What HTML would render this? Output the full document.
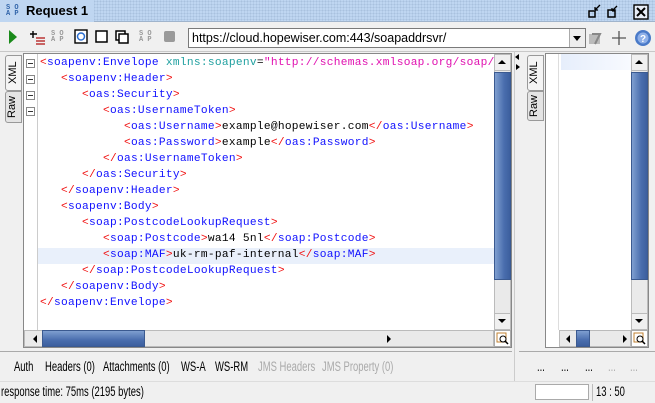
<!DOCTYPE html>
<html><head><meta charset="utf-8"><style>
*{box-sizing:border-box;margin:0;padding:0}
body{width:655px;height:403px;overflow:hidden;background:#f0f0f0;font-family:"Liberation Sans",sans-serif;font-size:12px;position:relative}
.abs{position:absolute}
.title{left:0;top:0;width:655px;height:22px;background:#bfd6f1;border-bottom:1px solid #a0b4cc;
background-image:radial-gradient(#a9c1de 0.8px,transparent 0.9px);background-size:3px 3px}
.title .lbl{position:absolute;left:0;top:0;height:22px;background:#bfd6f1;padding:3px 6px 0 26px;font-weight:bold;font-size:13px}
.soap{font-family:"Liberation Mono",monospace;font-size:7px;line-height:6px;color:#555;font-weight:bold;text-align:center}
.code{font-family:"Liberation Mono",monospace;font-size:11.2px;line-height:16px;white-space:pre;letter-spacing:0.28px}
.t{color:#1010ff}.p{color:#f01010}.a{color:#20a0a0}.v{color:#e010b0}.x{color:#000}
.sb{background:#eaeaea;border:1px solid #bbb}
.thumb{background:linear-gradient(90deg,#7f9fd0,#4a6eae 60%,#3c5f9e);border:1px solid #3b5a90}
.hthumb{background:linear-gradient(180deg,#7f9fd0,#4a6eae 60%,#3c5f9e);border:1px solid #3b5a90}
.tab{position:absolute;font-size:11px;writing-mode:vertical-rl;transform:rotate(180deg);border:1px solid #999;background:#f4f4f4;text-align:center;border-radius:0 3px 3px 0}
.c{position:absolute;font-size:13.5px;white-space:nowrap;transform:scaleX(0.7);transform-origin:0 0}
</style></head><body>
<div class="abs title"><div class="lbl">Request 1</div>
<div class="abs soap" style="left:6px;top:5px;color:#36a">S O<br>A P</div></div>
<svg class="abs" style="left:586px;top:4px" width="66" height="16" viewBox="0 0 66 16">
<rect x="3" y="7" width="6" height="6" fill="none" stroke="#000" stroke-width="1.5"/><path d="M9 6 L14 1 M9 6 h3 M9 6 v-3" stroke="#000" stroke-width="1.3" fill="none"/>
<rect x="22" y="6" width="7" height="7" fill="none" stroke="#000" stroke-width="1.5"/><path d="M26 7 L31 2 M26 7 h3 M26 7 v-3" stroke="#000" stroke-width="1.3" fill="none"/>
<rect x="48" y="1" width="14" height="14" fill="#e8eef8" stroke="#000" stroke-width="1.4"/><path d="M51 4 L59 12 M59 4 L51 12" stroke="#000" stroke-width="2"/>
</svg>
<svg class="abs" style="left:6px;top:28px" width="170" height="18">
<path d="M3 2 L11 9 L3 16 Z" fill="#1a8a1a"/>
<path d="M27 3 v7 M24 6 h7" stroke="#000" stroke-width="1.4"/><path d="M30 10 h9 M30 13 h9 M30 16 h9" stroke="#b01010" stroke-width="1.3"/>
<rect x="69" y="2" width="12" height="13" fill="#fff" stroke="#000" stroke-width="1.4"/><circle cx="75" cy="8.5" r="3.5" fill="none" stroke="#2a6ed0" stroke-width="1.5"/>
<rect x="90" y="3" width="11" height="11" fill="#fff" stroke="#000" stroke-width="1.5"/>
<rect x="110" y="3" width="9" height="9" fill="#fff" stroke="#000" stroke-width="1.5"/><rect x="113" y="6" width="9" height="9" fill="#fff" stroke="#000" stroke-width="1.5"/>
<rect x="158" y="3" width="11" height="11" rx="2" fill="#9a9a9a"/>
</svg>
<div class="abs soap" style="left:51px;top:31px;color:#999">S O<br>A P</div>
<div class="abs soap" style="left:139px;top:31px;color:#999">S O<br>A P</div>
<div class="abs" style="left:188px;top:28px;width:398px;height:20px;background:#fff;border:1px solid #7a7a7a;font-size:12.5px;padding:2px 3px">https://cloud.hopewiser.com:443/soapaddrsvr/</div>
<div class="abs" style="left:569px;top:29px;width:16px;height:18px;background:#eee;border-left:1px solid #aaa"></div>
<svg class="abs" style="left:571px;top:35px" width="12" height="8"><path d="M2 1 h8 l-4 5z" fill="#000"/></svg>
<svg class="abs" style="left:586px;top:28px" width="69" height="20">
<rect x="3" y="6" width="11" height="10" fill="#bbb"/><path d="M6 6 h8 L9 16" stroke="#888" fill="none" stroke-width="2"/>
<path d="M33 3 v14 M26 10 h14" stroke="#555" stroke-width="1.3"/>
<circle cx="57" cy="10" r="8" fill="#4a7ac8"/><circle cx="57" cy="10" r="5.5" fill="#8fb0e8"/><text x="54" y="14" font-size="10" font-weight="bold" fill="#fff" font-family="Liberation Sans">?</text>
</svg>
<div class="abs" style="left:0;top:51px;width:655px;height:1px;background:#c8c8c8"></div>
<div class="tab" style="left:5px;top:55px;width:17px;height:36px;padding-right:1px">XML</div>
<div class="tab" style="left:5px;top:91px;width:17px;height:32px;background:#e4e4e4">Raw</div>
<div class="abs" style="left:23px;top:53px;width:489px;height:295px;background:#fff;border:1px solid #888"></div>
<div class="abs" style="left:24px;top:54px;width:14px;height:276px;background:#fff;border-right:1px solid #ccc"></div>
<div class="abs" style="left:38px;top:248px;width:456px;height:16px;background:#e9f0fb"></div>
<svg class="abs" style="left:26px;top:56px" width="12" height="70">
<g fill="#fff" stroke="#888"><rect x="0.5" y="3.5" width="8" height="8"/><rect x="0.5" y="19.5" width="8" height="8"/><rect x="0.5" y="35.5" width="8" height="8"/><rect x="0.5" y="51.5" width="8" height="8"/></g>
<path d="M2 7.5h5M2 23.5h5M2 39.5h5M2 55.5h5" stroke="#333"/></svg>
<div class="abs code" style="left:40px;top:55px;width:454px;overflow:hidden"><span class="p">&lt;</span><span class="t">soapenv:Envelope</span> <span class="a">xmlns:soapenv</span>=<span class="v">"http://schemas.xmlsoap.org/soap/envelope/"</span>
   <span class="p">&lt;</span><span class="t">soapenv:Header</span><span class="p">&gt;</span>
      <span class="p">&lt;</span><span class="t">oas:Security</span><span class="p">&gt;</span>
         <span class="p">&lt;</span><span class="t">oas:UsernameToken</span><span class="p">&gt;</span>
            <span class="p">&lt;</span><span class="t">oas:Username</span><span class="p">&gt;</span><span class="x">example@hopewiser.com</span><span class="p">&lt;/</span><span class="t">oas:Username</span><span class="p">&gt;</span>
            <span class="p">&lt;</span><span class="t">oas:Password</span><span class="p">&gt;</span><span class="x">example</span><span class="p">&lt;/</span><span class="t">oas:Password</span><span class="p">&gt;</span>
         <span class="p">&lt;/</span><span class="t">oas:UsernameToken</span><span class="p">&gt;</span>
      <span class="p">&lt;/</span><span class="t">oas:Security</span><span class="p">&gt;</span>
   <span class="p">&lt;/</span><span class="t">soapenv:Header</span><span class="p">&gt;</span>
   <span class="p">&lt;</span><span class="t">soapenv:Body</span><span class="p">&gt;</span>
      <span class="p">&lt;</span><span class="t">soap:PostcodeLookupRequest</span><span class="p">&gt;</span>
         <span class="p">&lt;</span><span class="t">soap:Postcode</span><span class="p">&gt;</span><span class="x">wa14 5nl</span><span class="p">&lt;/</span><span class="t">soap:Postcode</span><span class="p">&gt;</span>
         <span class="p">&lt;</span><span class="t">soap:MAF</span><span class="p">&gt;</span><span class="x">uk-rm-paf-internal</span><span class="p">&lt;/</span><span class="t">soap:MAF</span><span class="p">&gt;</span>
      <span class="p">&lt;/</span><span class="t">soap:PostcodeLookupRequest</span><span class="p">&gt;</span>
   <span class="p">&lt;/</span><span class="t">soapenv:Body</span><span class="p">&gt;</span>
<span class="p">&lt;/</span><span class="t">soapenv:Envelope</span><span class="p">&gt;</span></div>
<div class="abs sb" style="left:494px;top:54px;width:17px;height:276px"></div>
<div class="abs" style="left:495px;top:55px;width:15px;height:16px;background:#f0f0f0;border-bottom:1px solid #bbb"></div>
<svg class="abs" style="left:497px;top:59px" width="10" height="6"><path d="M1 5 L5 1 L9 5Z" fill="#000"/></svg>
<div class="abs thumb" style="left:494px;top:72px;width:17px;height:208px"></div>
<div class="abs" style="left:495px;top:313px;width:15px;height:16px;background:#f0f0f0;border-top:1px solid #bbb"></div>
<svg class="abs" style="left:497px;top:318px" width="10" height="6"><path d="M1 1 L5 5 L9 1Z" fill="#000"/></svg>
<div class="abs sb" style="left:24px;top:330px;width:470px;height:17px"></div>
<svg class="abs" style="left:32px;top:334px" width="6" height="10"><path d="M5 1 L1 5 L5 9Z" fill="#000"/></svg>
<div class="abs hthumb" style="left:42px;top:330px;width:103px;height:17px"></div>
<svg class="abs" style="left:386px;top:334px" width="6" height="10"><path d="M1 1 L5 5 L1 9Z" fill="#000"/></svg>
<div class="abs" style="left:494px;top:330px;width:17px;height:17px;background:#fff;border:1px solid #aaa"></div>
<svg class="abs" style="left:496px;top:332px" width="13" height="13"><rect x="1" y="1" width="9" height="9" fill="none" stroke="#c08030"/><circle cx="7" cy="7" r="3" fill="#fff" stroke="#000"/><path d="M9 9 l3 3" stroke="#000" stroke-width="1.5"/></svg>
<div class="abs" style="left:514px;top:51px;width:1px;height:330px;background:#ccc"></div>
<svg class="abs" style="left:513px;top:53px" width="9" height="20"><path d="M6 1 L2 4 L6 7Z M3 11 L7 14 L3 17Z" fill="#000"/></svg>
<div class="tab" style="left:527px;top:55px;width:17px;height:36px">XML</div>
<div class="tab" style="left:527px;top:91px;width:17px;height:30px;background:#e4e4e4">Raw</div>
<div class="abs" style="left:545px;top:53px;width:104px;height:295px;background:#fff;border:1px solid #888"></div>
<div class="abs" style="left:546px;top:54px;width:13px;height:276px;border-right:1px solid #ddd"></div>
<div class="abs" style="left:561px;top:54px;width:70px;height:16px;background:linear-gradient(90deg,#e6eefb,#f8faff)"></div>
<div class="abs sb" style="left:631px;top:54px;width:17px;height:276px"></div>
<div class="abs" style="left:632px;top:55px;width:15px;height:16px;background:#f0f0f0;border-bottom:1px solid #bbb"></div>
<svg class="abs" style="left:634px;top:59px" width="10" height="6"><path d="M1 5 L5 1 L9 5Z" fill="#000"/></svg>
<div class="abs thumb" style="left:631px;top:72px;width:17px;height:208px"></div>
<div class="abs" style="left:632px;top:313px;width:15px;height:16px;background:#f0f0f0;border-top:1px solid #bbb"></div>
<svg class="abs" style="left:634px;top:318px" width="10" height="6"><path d="M1 1 L5 5 L9 1Z" fill="#000"/></svg>
<div class="abs sb" style="left:559px;top:330px;width:72px;height:17px"></div>
<svg class="abs" style="left:565px;top:334px" width="6" height="10"><path d="M5 1 L1 5 L5 9Z" fill="#000"/></svg>
<div class="abs hthumb" style="left:576px;top:330px;width:14px;height:17px"></div>
<svg class="abs" style="left:622px;top:334px" width="6" height="10"><path d="M1 1 L5 5 L1 9Z" fill="#000"/></svg>
<div class="abs" style="left:631px;top:330px;width:17px;height:17px;background:#fff;border:1px solid #aaa"></div>
<svg class="abs" style="left:633px;top:332px" width="13" height="13"><rect x="1" y="1" width="9" height="9" fill="none" stroke="#c08030"/><circle cx="7" cy="7" r="3" fill="#fff" stroke="#000"/><path d="M9 9 l3 3" stroke="#000" stroke-width="1.5"/></svg>
<div class="abs" style="left:0;top:351px;width:512px;height:1px;background:#aaa"></div>
<div class="abs" style="left:519px;top:351px;width:136px;height:1px;background:#aaa"></div>
<div class="c" style="left:14px;top:359px">Auth</div>
<div class="c" style="left:45px;top:359px">Headers (0)</div>
<div class="c" style="left:103px;top:359px">Attachments (0)</div>
<div class="c" style="left:181px;top:359px">WS-A</div>
<div class="c" style="left:215px;top:359px">WS-RM</div>
<div class="c" style="left:258px;top:359px;color:#aaa">JMS Headers</div>
<div class="c" style="left:322px;top:359px;color:#aaa">JMS Property (0)</div>
<div class="c" style="left:537px;top:359px">...</div>
<div class="c" style="left:561px;top:359px">...</div>
<div class="c" style="left:585px;top:359px">...</div>
<div class="c" style="left:608px;top:359px;color:#aaa">...</div>
<div class="c" style="left:630px;top:359px;color:#aaa">...</div>
<div class="abs" style="left:0;top:381px;width:655px;height:1px;background:#ddd"></div>
<div class="c" style="left:1px;top:384px">response time: 75ms (2195 bytes)</div>
<div class="abs" style="left:535px;top:384px;width:54px;height:16px;background:#fff;border:1px solid #aaa"></div>
<div class="abs" style="left:592px;top:384px;width:1px;height:17px;background:#bbb"></div>
<div class="c" style="left:596px;top:384px">13 : 50</div>
</body></html>
